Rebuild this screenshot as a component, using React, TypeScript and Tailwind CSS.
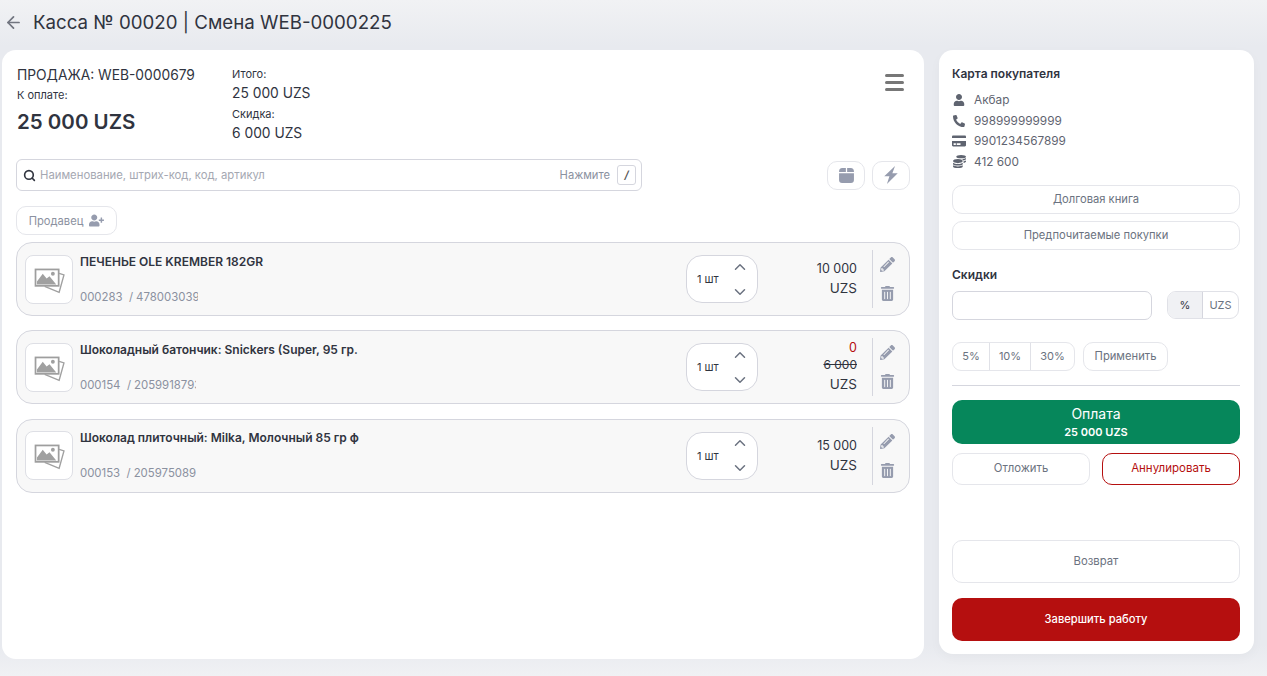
import { ArrowLeft, ChevronDown, ChevronUp, Search } from "lucide-react";
import {
  FaCoins,
  FaCreditCard,
  FaPencilAlt,
  FaPhoneAlt,
  FaTrashAlt,
  FaUser,
  FaUserPlus,
} from "react-icons/fa";

interface Item {
  name: string;
  code: string;
  barcode: string;
  price: string;
  oldPrice?: string;
}

const items: Item[] = [
  { name: "ПЕЧЕНЬЕ OLE KREMBER 182GR", code: "000283", barcode: "4780030399", price: "10 000" },
  { name: "Шоколадный батончик: Snickers (Super, 95 гр.", code: "000154", barcode: "2059918793", price: "0", oldPrice: "6 000" },
  { name: "Шоколад плиточный: Milka, Молочный 85 гр ф", code: "000153", barcode: "205975089", price: "15 000" },
];

function PhotoIcon() {
  return (
    <svg viewBox="0 0 32 28" className="w-[31px] h-[27px]" fill="none">
      <path d="M26 5.5l5 1.7-5 18L11 19" stroke="#a0a0a0" strokeWidth="1.4" />
      <rect x="1.5" y="1.5" width="24" height="17" stroke="#9e9e9e" strokeWidth="1.8" fill="#fff" />
      <path d="M3 17v-3L9 6l4 5 3-2.5 7 8.5z" fill="#a0a0a0" />
      <circle cx="19.5" cy="6" r="2" fill="#a0a0a0" />
    </svg>
  );
}

function BoxIcon() {
  return (
    <svg viewBox="0 0 16 16" className="w-[17px] h-[17px]" fill="#969cae">
      <path d="M1 4.2C1 2.4 2 1 4 1h3.4v3.6H1zM8.6 1H12c2 0 3 1.4 3 3.2v.4H8.6zM1 5.8h14v6.4c0 1.8-1 2.8-2.8 2.8H3.8C2 15 1 14 1 12.2z" />
    </svg>
  );
}

function BoltIcon() {
  return (
    <svg viewBox="0 0 12 16" className="w-[14px] h-[18px]" fill="#969cae">
      <path d="M9.6 0L0 9.2h4.6L2.4 16 12 6.4H7.2z" />
    </svg>
  );
}

function ItemRow({ item }: { item: Item }) {
  return (
    <div className="flex items-center h-[74px] rounded-[16px] border border-[#d5d6de] bg-[#f8f8f8] pl-[8px] pr-[8px]">
      <div className="w-[48px] h-[49px] shrink-0 pt-[4px] rounded-[8px] border border-[#dedfe5] bg-white flex items-center justify-center">
        <PhotoIcon />
      </div>
      <div className="w-[300px] ml-[7px] h-[49px] flex flex-col justify-between self-center">
        <div className="-mt-[1px] text-[12px] leading-[16px] font-semibold text-[#30343f] whitespace-nowrap">{item.name}</div>
        <div className="flex whitespace-nowrap text-[11.4px] leading-[14px] text-[#8b91a0]">
          <span>{item.code}&nbsp; / </span>
          <span className="ml-[3px] w-[62px] overflow-hidden">{item.barcode}</span>
        </div>
      </div>
      <div className="ml-[306px] w-[72px] h-[48px] shrink-0 rounded-[16px] border border-[#d5d6de] bg-white flex items-center justify-between pl-[10px] pr-[8px]">
        <span className="text-[11px] text-[#30343f]">1 шт</span>
        <div className="flex flex-col gap-[7px] text-[#6b7280]">
          <ChevronUp size={18} strokeWidth={2} />
          <ChevronDown size={18} strokeWidth={2} />
        </div>
      </div>
      <div className="w-[99px] shrink-0 -mt-[2px] text-right text-[#30343f]">
        {item.oldPrice ? (
          <>
            <div className="text-[12.5px] text-[#b50f0f] leading-[17px]">{item.price}</div>
            <div className="text-[12px] line-through leading-[18px]">{item.oldPrice}</div>
          </>
        ) : (
          <div className="text-[12.5px] leading-[20px]">{item.price}</div>
        )}
        <div className={`text-[13.5px] ${item.oldPrice ? "leading-[20px]" : "leading-[18px]"}`}>UZS</div>
      </div>
      <div className="ml-[15px] h-[58px] border-l border-[#d5d6de] pl-[7px] flex flex-col justify-center gap-[14px] text-[#969cae]">
        <FaPencilAlt size={15} />
        <FaTrashAlt size={15} />
      </div>
    </div>
  );
}

export default function App() {
  return (
    <div className="w-[1267px] h-[676px] overflow-hidden bg-[linear-gradient(to_bottom,#f1f2f4_0px,#e8eaef_46px,#e8eaef_645px,#f0f1f4_676px)] text-[#30343f] font-['Inter',sans-serif]">
      {/* header */}
      <header className="h-[50px] flex items-start pt-[11px] pl-[4px]">
        <ArrowLeft size={19} strokeWidth={2.2} className="mt-[2px] text-[#71757f]" />
        <h1 className="ml-[10px] text-[18.7px] leading-[24px] text-[#30343f]">Касса № 00020 | Смена WEB-0000225</h1>
      </header>

      <div className="flex items-start pl-[2px] gap-[15px]">
        {/* sale panel */}
        <main className="w-[922px] h-[609px] rounded-[14px] bg-white px-[14px] pt-[17px]">
          <div className="flex items-start h-[92px]">
            <div className="w-[216px] pl-[1px]">
              <div className="text-[13.8px] leading-[17px]">ПРОДАЖА: WEB-0000679</div>
              <div className="mt-[4px] text-[11px] leading-[15px]">К оплате:</div>
              <div className="mt-[5px] text-[20.5px] leading-[28px] font-semibold">25 000 UZS</div>
            </div>
            <div className="text-[13.8px]">
              <div className="text-[11px] leading-[15px]">Итого:</div>
              <div className="mt-[1px] leading-[20px]">25 000 UZS</div>
              <div className="mt-[4px] text-[11px] leading-[15px]">Скидка:</div>
              <div className="mt-[1px] leading-[20px]">6 000 UZS</div>
            </div>
            <div className="ml-auto mr-[6px] mt-[7px] w-[19px] flex flex-col gap-[4px]">
              <div className="h-[3px] rounded-full bg-[#777]" />
              <div className="h-[3px] rounded-full bg-[#777]" />
              <div className="h-[3px] rounded-full bg-[#777]" />
            </div>
          </div>

          <div className="flex items-center">
            <div className="w-[626px] h-[32px] rounded-[6px] border border-[#d5d6de] flex items-center pl-[6px] pr-[5px]">
              <Search size={13} strokeWidth={3} className="text-[#30343f]" />
              <span className="ml-[4px] pt-[1px] text-[11.3px] text-[#a5a8b2]">Наименование, штрих-код, код, артикул</span>
              <span className="ml-auto pt-[1px] text-[11.2px] text-[#8b91a0]">Нажмите</span>
              <span className="ml-[7px] w-[19px] h-[20px] rounded-[3px] border border-[#d5d6de] flex items-center justify-center text-[11px] font-semibold italic text-[#555]">
                /
              </span>
            </div>
            <button className="ml-auto w-[38px] h-[29px] rounded-[10px] border border-[#e5e6eb] flex items-center justify-center">
              <BoxIcon />
            </button>
            <button className="ml-[7px] w-[38px] h-[29px] rounded-[10px] border border-[#e5e6eb] flex items-center justify-center">
              <BoltIcon />
            </button>
          </div>

          <button className="mt-[15px] w-[101px] h-[29px] rounded-[10px] border border-[#e5e6eb] flex items-center justify-center gap-[6px] text-[11.2px] text-[#8b91a0]">
            <span className="pt-[1px]">Продавец</span>
            <FaUserPlus size={15} className="text-[#969cae]" />
          </button>

          <div className="mt-[7px] flex flex-col gap-[14.4px]">
            {items.map((item) => (
              <ItemRow key={item.code} item={item} />
            ))}
          </div>
        </main>

        {/* customer panel */}
        <aside className="w-[315px] h-[604px] rounded-[14px] bg-white pl-[13px] pr-[14px] pt-[16px] shadow-[0_4px_12px_rgba(0,0,0,0.03)]">
          <h2 className="text-[12px] leading-[16px] font-semibold">Карта покупателя</h2>
          <div className="mt-[10px] flex flex-col gap-[4.5px] text-[11.8px] leading-[16px] text-[#5f6470]">
            <div className="flex items-center gap-[8px]"><span className="w-[14px] flex justify-center"><FaUser size={12} /></span>Акбар</div>
            <div className="flex items-center gap-[8px]"><span className="w-[14px] flex justify-center"><FaPhoneAlt size={12} /></span>998999999999</div>
            <div className="flex items-center gap-[8px]"><span className="w-[14px] flex justify-center"><FaCreditCard size={14} /></span>9901234567899</div>
            <div className="flex items-center gap-[8px]"><span className="w-[14px] flex justify-center"><FaCoins size={13} /></span>412 600</div>
          </div>

          <button className="mt-[15px] w-full h-[29px] rounded-[10px] border border-[#e5e6eb] text-[11.2px] text-[#6b7280]">Долговая книга</button>
          <button className="mt-[7px] w-full h-[29px] rounded-[10px] border border-[#e5e6eb] text-[11.2px] text-[#6b7280]">Предпочитаемые покупки</button>

          <h2 className="mt-[17px] text-[12px] leading-[16px] font-semibold">Скидки</h2>
          <div className="mt-[8px] flex items-center">
            <input className="w-[200px] h-[29px] rounded-[7px] border border-[#d5d6de] bg-white" />
            <div className="ml-[15px] flex h-[28px] rounded-[9px] border border-[#e0e1e7] overflow-hidden text-[11px]">
              <div className="w-[35px] bg-[#f0f1f4] border-r border-[#d5d6de] flex items-center justify-center text-[#30343f]">%</div>
              <div className="w-[35px] flex items-center justify-center text-[#6b7280]">UZS</div>
            </div>
          </div>

          <div className="mt-[22px] flex items-center">
            <div className="flex h-[29px] rounded-[9px] border border-[#e5e6eb] text-[11px] text-[#6b7280] overflow-hidden">
              <div className="w-[37px] flex items-center justify-center border-r border-[#e0e1e7]">5%</div>
              <div className="w-[41px] flex items-center justify-center border-r border-[#e0e1e7]">10%</div>
              <div className="w-[43px] flex items-center justify-center">30%</div>
            </div>
            <button className="ml-[8px] w-[85px] h-[29px] rounded-[10px] border border-[#e5e6eb] text-[11.2px] text-[#6b7280]">Применить</button>
          </div>

          <div className="mt-[14px] border-t border-[#d5d6de]" />

          <button className="mt-[14px] w-full h-[44px] rounded-[10px] bg-[#06875b] text-white flex flex-col items-center justify-center">
            <span className="text-[14px] leading-[20px]">Оплата</span>
            <span className="text-[11px] leading-[16px] font-semibold">25 000 UZS</span>
          </button>

          <div className="mt-[9px] flex justify-between">
            <button className="w-[138px] h-[32px] rounded-[10px] border border-[#e5e6eb] text-[11.3px] text-[#6b7280]">Отложить</button>
            <button className="w-[138px] h-[32px] rounded-[10px] border border-[#b50f0f] text-[11.5px] text-[#b50f0f]">Аннулировать</button>
          </div>

          <button className="mt-[55px] w-full h-[43px] rounded-[10px] border border-[#e5e6eb] text-[11.3px] text-[#6b7280]">Возврат</button>
          <button className="mt-[15px] w-full h-[43px] rounded-[10px] bg-[#b50f0f] text-white text-[11.2px] font-medium">Завершить работу</button>
        </aside>
      </div>
    </div>
  );
}
